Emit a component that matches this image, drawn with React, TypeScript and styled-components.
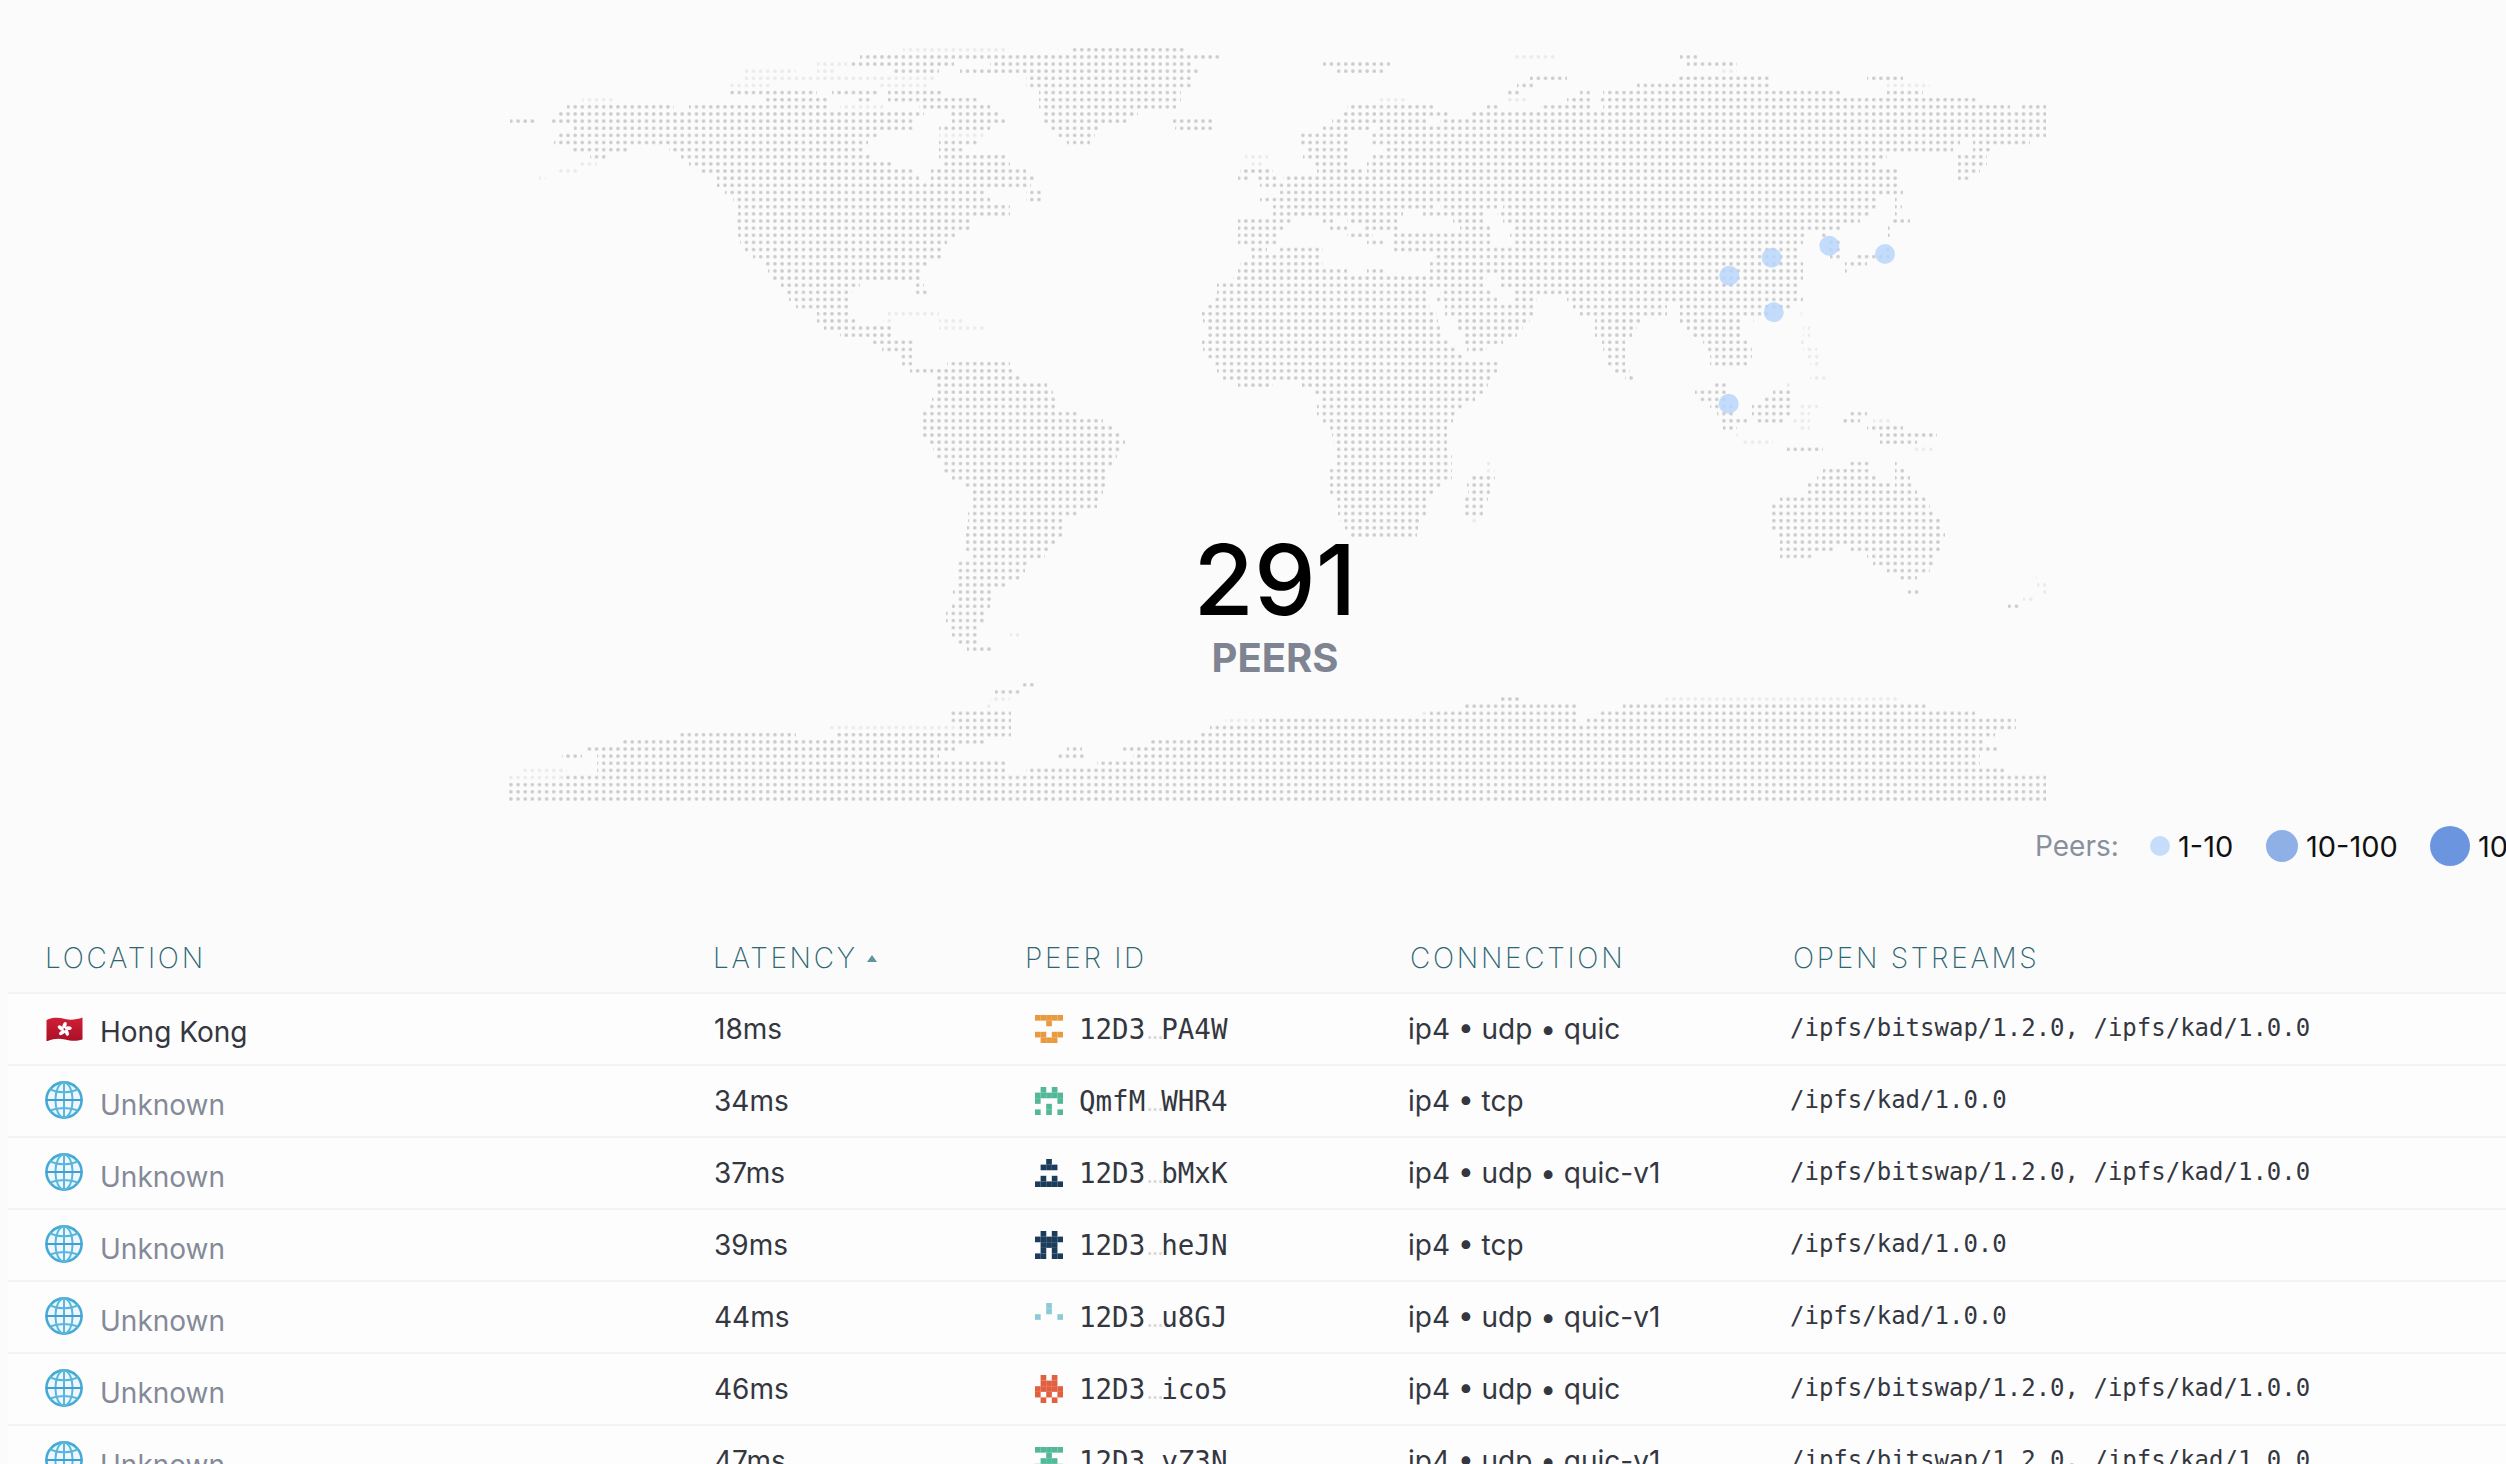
import { FC, ReactElement } from "react";
import styled, { createGlobalStyle } from "styled-components";

/*
    ====================================================== [Map data]======================================================
*/

const DOT_PITCH = 7.135;
const DOT_ORIGIN_X = 1024.67;
const DOT_ORIGIN_Y = 485;

// dot row index -> land spans [x1, x2, x1, x2, ...], in page pixels
const LAND: Record<number, number[]> = {
  [-61]: [1072, 1184],
  [-60]: [860, 1222, 1680, 1700],
  [-59]: [850, 954, 990, 1194, 1323, 1390, 1687, 1737],
  [-58]: [893, 939, 960, 1199, 1337, 1383],
  [-57]: [1026, 1194, 1530, 1567, 1677, 1770, 1867, 1903],
  [-56]: [1026, 1192, 1517, 1533, 1637, 1770],
  [-55]: [730, 817, 832, 878, 888, 944, 1039, 1181, 1508, 1520, 1580, 1590, 1603, 1840, 1887, 1923],
  [-54]: [766, 827, 857, 873, 888, 980, 1039, 1181, 1567, 1590, 1600, 1977],
  [-53]: [567, 674, 689, 827, 919, 990, 1039, 1176, 1347, 1433, 1487, 1500, 1540, 1590, 1603, 2010, 2022, 2046],
  [-52]: [557, 924, 950, 998, 1044, 1138, 1343, 1450, 1470, 2046],
  [-51]: [510, 536, 549, 914, 952, 1005, 1044, 1128, 1173, 1212, 1332, 1427, 1440, 2046],
  [-50]: [574, 914, 939, 990, 1051, 1100, 1175, 1212, 1323, 1370, 1380, 2046],
  [-49]: [559, 878, 1057, 1095, 1300, 1350, 1370, 2046],
  [-48]: [554, 868, 939, 980, 1067, 1090, 1300, 1350, 1370, 1960, 1973, 2030],
  [-47]: [572, 628, 669, 863, 939, 965, 1307, 1350, 1383, 1953, 1973, 1990],
  [-46]: [590, 608, 681, 870, 939, 1005, 1303, 1350, 1373, 1887, 1958, 1987],
  [-45]: [689, 893, 944, 1010, 1313, 1347, 1367, 1877, 1958, 1987],
  [-44]: [699, 914, 931, 1026, 1240, 1273, 1317, 1363, 1367, 1900, 1958, 1980],
  [-43]: [717, 919, 931, 1034, 1238, 1248, 1258, 1278, 1283, 1900, 1958, 1970],
  [-42]: [717, 1031, 1260, 1283, 1287, 1900],
  [-41]: [725, 985, 1026, 1041, 1280, 1903],
  [-40]: [733, 990, 1026, 1044, 1260, 1877, 1895, 1900],
  [-39]: [738, 1010, 1273, 1433, 1440, 1497, 1503, 1877, 1895, 1902],
  [-38]: [738, 1010, 1273, 1403, 1423, 1483, 1497, 1870, 1895, 1900],
  [-37]: [734, 970, 1238, 1293, 1323, 1333, 1347, 1397, 1453, 1483, 1503, 1860, 1890, 1910],
  [-36]: [738, 970, 1238, 1283, 1330, 1347, 1363, 1400, 1460, 1490, 1513, 1840, 1888, 1893],
  [-35]: [738, 955, 1238, 1277, 1347, 1373, 1393, 1490, 1510, 1807, 1820, 1827, 1888, 1893],
  [-34]: [740, 947, 1238, 1277, 1367, 1383, 1393, 1490, 1513, 1803, 1827, 1840],
  [-33]: [745, 944, 1250, 1267, 1280, 1323, 1393, 1797, 1827, 1840, 1885, 1889],
  [-32]: [753, 942, 1252, 1322, 1433, 1797, 1830, 1840, 1857, 1893],
  [-31]: [763, 929, 1240, 1323, 1430, 1803, 1845, 1867],
  [-30]: [768, 921, 1238, 1347, 1367, 1383, 1430, 1803, 1845, 1849],
  [-29]: [773, 921, 1233, 1487, 1497, 1803],
  [-28]: [781, 860, 916, 924, 1217, 1483, 1500, 1797],
  [-27]: [784, 852, 916, 929, 1217, 1427, 1440, 1493, 1513, 1797],
  [-26]: [789, 850, 1213, 1427, 1437, 1497, 1513, 1537, 1567, 1803],
  [-25]: [796, 850, 1208, 1430, 1445, 1533, 1573, 1667, 1680, 1790],
  [-24]: [817, 850, 1202, 1437, 1445, 1533, 1580, 1667, 1680, 1773],
  [-23]: [817, 855, 1203, 1438, 1457, 1530, 1595, 1643, 1680, 1740],
  [-22]: [824, 893, 1208, 1440, 1458, 1523, 1595, 1637, 1687, 1740],
  [-21]: [840, 891, 1208, 1443, 1463, 1517, 1595, 1632, 1690, 1740],
  [-20]: [870, 914, 1202, 1450, 1465, 1503, 1602, 1625, 1703, 1747],
  [-19]: [882, 912, 1203, 1457, 1467, 1487, 1603, 1625, 1708, 1752],
  [-18]: [900, 912, 1205, 1463, 1605, 1625, 1710, 1752],
  [-17]: [902, 912, 947, 1010, 1215, 1498, 1608, 1625, 1710, 1747],
  [-16]: [910, 933, 937, 1012, 1217, 1497, 1612, 1630],
  [-15]: [937, 1020, 1223, 1490, 1625, 1633],
  [-14]: [937, 1047, 1238, 1273, 1302, 1488, 1713, 1727],
  [-13]: [938, 1053, 1313, 1483, 1695, 1727, 1773, 1790],
  [-12]: [932, 1055, 1320, 1475, 1700, 1727, 1763, 1790],
  [-11]: [930, 1055, 1317, 1465, 1710, 1733, 1752, 1790],
  [-10]: [923, 1077, 1317, 1455, 1717, 1733, 1752, 1790, 1847, 1867],
  [-9]: [923, 1103, 1323, 1453, 1722, 1747, 1757, 1783, 1840, 1860],
  [-8]: [923, 1113, 1330, 1447, 1723, 1737, 1867, 1903],
  [-7]: [923, 1120, 1332, 1447, 1880, 1937],
  [-6]: [930, 1125, 1333, 1447, 1880, 1917],
  [-5]: [933, 1122, 1337, 1447, 1787, 1823],
  [-4]: [937, 1117, 1337, 1452],
  [-3]: [943, 1112, 1337, 1452, 1847, 1870, 1895, 1900],
  [-2]: [944, 1105, 1330, 1452, 1823, 1870, 1895, 1907],
  [-1]: [952, 1105, 1330, 1452, 1472, 1495, 1817, 1877, 1895, 1910],
  [0]: [965, 1105, 1330, 1442, 1467, 1490, 1808, 1890, 1895, 1912],
  [1]: [970, 1103, 1330, 1433, 1468, 1490, 1808, 1917],
  [2]: [972, 1098, 1337, 1427, 1465, 1488, 1780, 1927],
  [3]: [972, 1097, 1338, 1427, 1465, 1483, 1772, 1930],
  [4]: [968, 1077, 1338, 1427, 1465, 1483, 1772, 1933],
  [5]: [968, 1063, 1340, 1420, 1772, 1943],
  [6]: [967, 1063, 1345, 1418, 1772, 1943],
  [7]: [966, 1063, 1348, 1417, 1778, 1945],
  [8]: [966, 1055, 1780, 1943],
  [9]: [966, 1048, 1780, 1833, 1850, 1940],
  [10]: [970, 1045, 1780, 1813, 1867, 1933],
  [11]: [958, 1027, 1873, 1933],
  [12]: [958, 1025, 1887, 1930],
  [13]: [955, 1023, 1897, 1917],
  [14]: [957, 1005],
  [15]: [953, 992, 1908, 1922],
  [16]: [957, 992],
  [17]: [952, 990, 2008, 2020],
  [18]: [946, 987],
  [19]: [946, 987],
  [20]: [948, 980],
  [21]: [952, 977],
  [22]: [955, 977],
  [23]: [967, 993],
  [28]: [1021, 1036],
  [29]: [995, 1021],
  [30]: [1500, 1521],
  [31]: [1465, 1577, 1623, 1929],
  [32]: [949, 1011, 1430, 1577, 1597, 1975],
  [33]: [949, 1011, 1260, 1577, 1587, 2016],
  [34]: [960, 1011, 1210, 2016],
  [35]: [679, 796, 837, 1011, 1199, 1995],
  [36]: [623, 985, 1148, 1985],
  [37]: [587, 955, 1067, 1082, 1123, 2000],
  [38]: [562, 582, 597, 939, 1057, 1087, 1133, 1980],
  [39]: [597, 1005, 1097, 1980],
  [40]: [597, 1005, 1026, 2005],
  [41]: [562, 2046],
  [42]: [508, 2046],
  [43]: [508, 2046],
  [44]: [508, 2046],
};

// coast strips where the reference shows only cut, faint dots
const FAINT_LAND: Record<number, number[]> = {
  [-61]: [903, 1005],
  [-60]: [1515, 1555],
  [-59]: [817, 847],
  [-58]: [745, 796, 817, 837, 1720, 1737],
  [-57]: [745, 934],
  [-56]: [730, 770, 878, 930, 1887, 1930],
  [-54]: [582, 613, 1380, 1405, 1508, 1527],
  [-53]: [840, 883],
  [-49]: [939, 985],
  [-46]: [1245, 1268],
  [-45]: [577, 597, 1252, 1263],
  [-44]: [559, 577],
  [-43]: [539, 546],
  [-24]: [888, 939, 1798, 1802],
  [-23]: [883, 893, 939, 965, 1753, 1757],
  [-22]: [939, 985, 1803, 1810],
  [-21]: [1803, 1810],
  [-20]: [1801, 1806],
  [-19]: [1803, 1817],
  [-18]: [1807, 1820],
  [-17]: [1810, 1820],
  [-15]: [1810, 1827],
  [-14]: [1787, 1793],
  [-11]: [1800, 1818],
  [-10]: [1800, 1810],
  [-9]: [1793, 1810, 1873, 1893],
  [-8]: [1797, 1810],
  [-7]: [1733, 1738],
  [-6]: [1743, 1773],
  [-5]: [1913, 1933],
  [-3]: [1487, 1492],
  [-2]: [1487, 1495],
  [5]: [1472, 1477],
  [13]: [2032, 2037],
  [14]: [2037, 2046],
  [15]: [2040, 2046],
  [16]: [2023, 2033],
  [21]: [1010, 1023],
  [30]: [990, 1010, 1664, 1898],
  [31]: [985, 990],
  [32]: [1419, 1430],
  [33]: [1225, 1260],
  [34]: [827, 960],
  [40]: [521, 567],
  [41]: [509, 562],
};

const spansToPath = (land: Record<number, number[]>): string =>
  Object.entries(land)
    .map(([row, spans]) => {
      const y = DOT_ORIGIN_Y + Number(row) * DOT_PITCH - DOT_PITCH / 2;
      let d = "";
      for (let i = 0; i < spans.length; i += 2) {
        d += `M${spans[i]} ${y}H${spans[i + 1]}V${y + DOT_PITCH}H${spans[i]}Z`;
      }
      return d;
    })
    .join("");

const PEER_BUBBLES: Array<[number, number]> = [
  [1729.3, 275.7],
  [1771.7, 257.7],
  [1829.3, 245.7],
  [1885, 254],
  [1773.7, 312.3],
  [1728.7, 403.7],
];

/*
    ====================================================== [Table data]======================================================
*/

interface IPeerRow {
  location: string;
  latency: string;
  idStart: string;
  idEnd: string;
  color: string;
  cells: string[];
  connection: string;
  streams: string;
}

const BITSWAP_AND_KAD = "/ipfs/bitswap/1.2.0, /ipfs/kad/1.0.0";
const KAD_ONLY = "/ipfs/kad/1.0.0";

const PEERS: Array<IPeerRow> = [
  {
    location: "Hong Kong",
    latency: "18ms",
    idStart: "12D3",
    idEnd: "PA4W",
    color: "#e99a3f",
    cells: ["11111", "00100", "00000", "11011", "01110"],
    connection: "ip4 • udp • quic",
    streams: BITSWAP_AND_KAD,
  },
  {
    location: "Unknown",
    latency: "34ms",
    idStart: "QmfM",
    idEnd: "WHR4",
    color: "#52b898",
    cells: ["01010", "11111", "10001", "00100", "10101"],
    connection: "ip4 • tcp",
    streams: KAD_ONLY,
  },
  {
    location: "Unknown",
    latency: "37ms",
    idStart: "12D3",
    idEnd: "bMxK",
    color: "#1b3c5a",
    cells: ["00100", "01110", "00000", "01010", "11111"],
    connection: "ip4 • udp • quic-v1",
    streams: BITSWAP_AND_KAD,
  },
  {
    location: "Unknown",
    latency: "39ms",
    idStart: "12D3",
    idEnd: "heJN",
    color: "#1b3c5a",
    cells: ["01010", "11111", "01110", "01010", "11011"],
    connection: "ip4 • tcp",
    streams: KAD_ONLY,
  },
  {
    location: "Unknown",
    latency: "44ms",
    idStart: "12D3",
    idEnd: "u8GJ",
    color: "#8bcbd6",
    cells: ["00100", "00100", "10001", "00000", "00000"],
    connection: "ip4 • udp • quic-v1",
    streams: KAD_ONLY,
  },
  {
    location: "Unknown",
    latency: "46ms",
    idStart: "12D3",
    idEnd: "ico5",
    color: "#e0603f",
    cells: ["01010", "01110", "11111", "10101", "01010"],
    connection: "ip4 • udp • quic",
    streams: BITSWAP_AND_KAD,
  },
  {
    location: "Unknown",
    latency: "47ms",
    idStart: "12D3",
    idEnd: "yZ3N",
    color: "#52b898",
    cells: ["11111", "00100", "01110", "10101", "00100"],
    connection: "ip4 • udp • quic-v1",
    streams: BITSWAP_AND_KAD,
  },
];

/*
    ====================================================== [Styles]======================================================
*/

const GlobalStyle = createGlobalStyle`
  html, body {
    margin: 0;
    height: 100%;
    overflow: hidden;
    background: #fbfbfc;
  }
`;

const Page = styled.div`
  width: 2554px;
  font-family: Inter, "Noto Sans", sans-serif;
  font-size: 28px;
  color: #34373f;
`;

const MapSection = styled.section`
  position: relative;
  display: flex;
  justify-content: center;
  padding-top: 44px;
`;

const MapSvg = styled.svg`
  display: block;
  width: 1540px;
  height: 760px;
`;

const LandDots = styled.path<{ $faint?: boolean }>`
  filter: blur(0.45px);
  opacity: ${(p) => (p.$faint ? 0.35 : 1)};
`;

const PeerTotal = styled.div`
  position: absolute;
  top: 531px;
  left: 0;
  right: 4px;
  display: flex;
  flex-direction: column;
  align-items: center;
`;

const TotalNumber = styled.div`
  font-size: 98px;
  line-height: 98px;
  font-weight: 500;
  color: #000;
`;

const TotalLabel = styled.div`
  margin-top: 9px;
  font-size: 40px;
  line-height: 40px;
  font-weight: 700;
  color: #7f8493;
`;

const Legend = styled.div`
  display: flex;
  align-items: center;
  height: 40px;
  margin-top: 22px;
  padding-left: 2035px;
`;

const LegendTitle = styled.span`
  width: 115px;
  color: #8a8f9c;
`;

const LegendItem = styled.span<{ $width: number }>`
  display: flex;
  align-items: center;
  gap: 8px;
  width: ${(p) => p.$width}px;
  font-size: 29px;
  color: #111;
`;

const LegendDot = styled.i<{ $size: number; $color: string }>`
  flex: none;
  width: ${(p) => p.$size}px;
  height: ${(p) => p.$size}px;
  border-radius: 50%;
  background: ${(p) => p.$color};
`;

const Table = styled.div`
  margin: 56px 0 0 8px;
`;

const HeaderRow = styled.div`
  display: grid;
  grid-template-columns: 668px 312px 385px 383px 1fr;
  align-items: center;
  height: 68px;
  padding: 2px 0 0 37px;
  border-bottom: 2px solid #f4f4f5;
`;

const HeaderCell = styled.div`
  display: flex;
  align-items: center;
  gap: 9px;
  font-size: 28px;
  font-weight: 200;
  letter-spacing: 2.7px;
  color: #2c6670;
`;

const SortArrow = styled.i`
  width: 0;
  height: 0;
  border-left: 5.5px solid transparent;
  border-right: 5.5px solid transparent;
  border-bottom: 7px solid #5f959b;
`;

const Row = styled.div`
  display: grid;
  grid-template-columns: 669px 321px 373px 382px 1fr;
  align-items: center;
  height: 70px;
  padding-left: 37px;
  background: #fdfdfd;
  border-bottom: 2px solid #f4f4f5;
`;

const LocationCell = styled.div`
  display: flex;
  align-items: center;
`;

const LocationIcon = styled.div`
  flex: none;
  width: 38px;
  height: 38px;
  display: flex;
  align-items: center;
  justify-content: center;
  margin: 0 17px 0 0;
  padding-bottom: 3px;
`;

const LocationName = styled.span<{ $known: boolean }>`
  padding-top: ${(p) => (p.$known ? 6 : 8)}px;
  color: ${(p) => (p.$known ? "#34373f" : "#858a99")};
`;

const PeerIdCell = styled.div`
  display: flex;
  align-items: center;
  gap: 16px;
`;

const PeerIdText = styled.span`
  font-family: "DejaVu Sans Mono", monospace;
  font-size: 27.5px;
  white-space: nowrap;
`;

const PeerIdDots = styled.span`
  color: #d8d8d8;
  font-size: 15px;
  font-weight: 700;
  letter-spacing: -3.7px;
`;

const Streams = styled.div`
  padding-bottom: 2px;
  font-family: "DejaVu Sans Mono", monospace;
  font-size: 24px;
  white-space: nowrap;
`;

/*
    ====================================================== [Icons]======================================================
*/

const Identicon: FC<{ color: string; cells: string[] }> = ({ color, cells }) => (
  <svg width="28" height="28" viewBox="0 0 5 5" fill={color} style={{ flex: "none" }}>
    {cells.map((line, y) =>
      line.split("").map((cell, x) =>
        cell === "1" ? <rect key={`${x}-${y}`} x={x} y={y} width="1.01" height="1.01" /> : null
      )
    )}
  </svg>
);

const HongKongFlag: FC = () => (
  <svg width="37" height="26" viewBox="0 -1.5 37 26">
    <defs>
      <linearGradient id="flag-red" x1="0" y1="0" x2="0" y2="1">
        <stop offset="0" stopColor="#cf2036" />
        <stop offset="1" stopColor="#a90f28" />
      </linearGradient>
    </defs>
    <path d="M0.5 3.5C7 0.5 13 1 19 2.5S31 3 36.5 1V23C30 25 25 24.5 19 23S7 22 0.5 25Z" fill="url(#flag-red)" />
    <g fill="#fff" transform="translate(18.5 12.8)">
      {[0, 72, 144, 216, 288].map((angle) => (
        <ellipse key={angle} cx="0" cy="-4" rx="1.9" ry="3.4" transform={`rotate(${angle}) rotate(20 0 -4)`} />
      ))}
    </g>
  </svg>
);

const GlobeIcon: FC = () => (
  <svg width="38" height="38" viewBox="0 0 38 38" fill="none" stroke="#5ab6dc" strokeWidth="2">
    <circle cx="19" cy="19" r="17.6" fill="#eef8fc" stroke="#45aad6" strokeWidth="2.6" />
    <ellipse cx="19" cy="19" rx="8.6" ry="17.6" />
    <path d="M19 1.4V36.6" />
    <path d="M1.4 19H36.6" stroke="#3f9fcf" />
    <path d="M5 8.5C13 12 25 12 33 8.5" />
    <path d="M5 29.5C13 26 25 26 33 29.5" />
  </svg>
);

/*
    ====================================================== [App Component]======================================================
*/

const App: FC = (): ReactElement => {
  return (
    <Page>
      <GlobalStyle />
      <MapSection>
        <MapSvg viewBox="507 44 1540 760">
          <defs>
            <pattern
              id="map-dots"
              patternUnits="userSpaceOnUse"
              x={DOT_ORIGIN_X - DOT_PITCH / 2}
              y={DOT_ORIGIN_Y - DOT_PITCH / 2}
              width={DOT_PITCH}
              height={DOT_PITCH}
            >
              <circle cx={DOT_PITCH / 2} cy={DOT_PITCH / 2} r="1.8" fill="#cbcbcd" />
            </pattern>
          </defs>
          <LandDots d={spansToPath(LAND)} fill="url(#map-dots)" />
          <LandDots $faint d={spansToPath(FAINT_LAND)} fill="url(#map-dots)" />
          {PEER_BUBBLES.map(([cx, cy]) => (
            <circle key={cx} cx={cx} cy={cy} r="10" fill="#b5d4fb" fillOpacity="0.8" />
          ))}
        </MapSvg>
        <PeerTotal>
          <TotalNumber>291</TotalNumber>
          <TotalLabel>PEERS</TotalLabel>
        </PeerTotal>
      </MapSection>
      <Legend>
        <LegendTitle>Peers:</LegendTitle>
        <LegendItem $width={116}>
          <LegendDot $size={20} $color="#c5dcfb" />
          1-10
        </LegendItem>
        <LegendItem $width={164}>
          <LegendDot $size={32} $color="#8fafe7" />
          10-100
        </LegendItem>
        <LegendItem $width={120}>
          <LegendDot $size={40} $color="#6c95e0" />
          100+
        </LegendItem>
      </Legend>
      <Table>
        <HeaderRow>
          <HeaderCell>LOCATION</HeaderCell>
          <HeaderCell>
            LATENCY
            <SortArrow />
          </HeaderCell>
          <HeaderCell>PEER ID</HeaderCell>
          <HeaderCell>CONNECTION</HeaderCell>
          <HeaderCell>OPEN STREAMS</HeaderCell>
        </HeaderRow>
        {PEERS.map((peer: IPeerRow) => (
          <Row key={peer.idEnd}>
            <LocationCell>
              <LocationIcon>{peer.location === "Unknown" ? <GlobeIcon /> : <HongKongFlag />}</LocationIcon>
              <LocationName $known={peer.location !== "Unknown"}>{peer.location}</LocationName>
            </LocationCell>
            <div>{peer.latency}</div>
            <PeerIdCell>
              <Identicon color={peer.color} cells={peer.cells} />
              <PeerIdText>
                {peer.idStart}
                <PeerIdDots>...</PeerIdDots>
                {peer.idEnd}
              </PeerIdText>
            </PeerIdCell>
            <div>{peer.connection}</div>
            <Streams>{peer.streams}</Streams>
          </Row>
        ))}
      </Table>
    </Page>
  );
};

export default App;
